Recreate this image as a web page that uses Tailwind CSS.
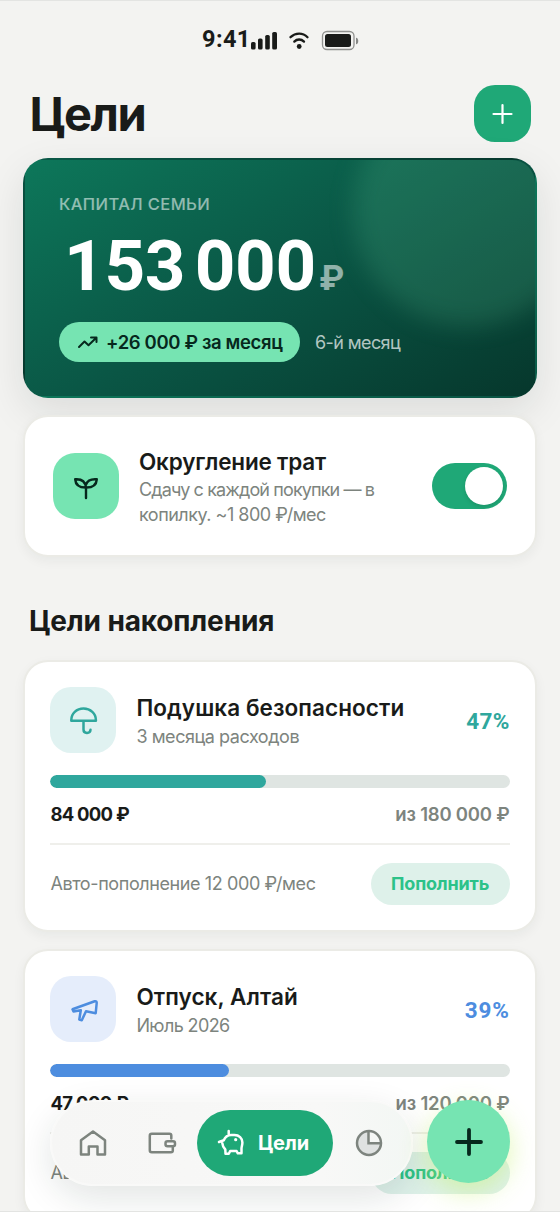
<!DOCTYPE html>
<html lang="ru">
<head>
<meta charset="utf-8">
<title>Цели</title>
<script src="https://cdn.jsdelivr.net/npm/@tailwindcss/browser@4"></script>
</head>
<body class="bg-[#f3f3f1]">
<div class="relative h-[1212px] w-[560px] overflow-hidden border-y border-[#e3e4e2] bg-[#f3f3f1] px-[23px] font-['Inter','Liberation_Sans',sans-serif] text-[#191b19]">

  <!-- Status bar -->
  <div class="flex h-[76px] items-center justify-center pl-[2px] pt-[1px]">
    <span class="w-[48px] whitespace-nowrap font-['Roboto',sans-serif] text-[23.500px] font-bold leading-none tracking-[0.4px]">9:41</span>
    <svg width="110" height="24" viewBox="0 0 110 24" fill="#191b19">
      <rect x="1" y="14" width="4.6" height="7.500" rx="1.6"/><rect x="8" y="10.500" width="4.6" height="11" rx="1.6"/><rect x="15.2" y="7" width="4.6" height="14.500" rx="1.6"/><rect x="22.2" y="4" width="4.8" height="17.500" rx="1.6"/>
      <path d="M40.500 9.200C45.500 4.500 52.800 4.500 57.500 9.200M44.300 13.600C47 10.800 51.200 10.800 54 13.600" fill="none" stroke="#191b19" stroke-width="2.300" stroke-linecap="round"/>
      <circle cx="49.200" cy="18.500" r="2.400"/>
      <rect x="72.500" y="3.500" width="31.500" height="18" rx="4.500" fill="none" stroke="#191b19" stroke-opacity=".45" stroke-width="1.300"/>
      <rect x="75" y="6" width="26" height="13" rx="2.500"/>
      <path d="M106 9.700c3 .3 3 6.300 0 6.600z" fill-opacity=".5"/>
    </svg>
  </div>

  <!-- Header -->
  <header class="flex h-[81px] items-start justify-between pl-[6.500px] pr-[6px] pt-[8px]">
    <h1 class="text-[47px] font-bold leading-[57px] tracking-[-1.500px]">Цели</h1>
    <button class="flex size-[57px] items-center justify-center rounded-[21px] bg-[#1fa877]">
      <svg width="24" height="24" viewBox="0 0 24 24" stroke="#fff" stroke-width="2.200" stroke-linecap="round"><path d="M11.500 3v18M2.500 12h18"/></svg>
    </button>
  </header>

  <!-- Balance -->
  <section class="relative h-[240px] w-[514px] overflow-hidden rounded-[25px] border-2 border-transparent bg-[linear-gradient(150deg,#0d775a_0%,#0a5645_50%,#06372c_100%)] px-[34px] pt-[33px] shadow-[0_14px_40px_rgba(20,30,25,0.1)]">
    <div class="absolute -top-[64px] left-[328px] size-[230px] rounded-full bg-[#6ee0a8]/16 blur-[12px]"></div>
    <div class="relative text-white">
      <div class="text-[16.500px] font-medium leading-[22px] tracking-[0.4px] text-white/55">КАПИТАЛ СЕМЬИ</div>
      <div class="mt-[23px] flex h-[56px] items-baseline whitespace-nowrap pl-[5px] leading-[56px]">
        <span class="w-[255px] font-['Roboto',sans-serif] text-[71px] font-bold tracking-[-0.3px] [word-spacing:-8px]">153 000</span>
        <span class="text-[34px] font-bold text-white/55">₽</span>
      </div>
      <div class="mt-[28px] flex items-center gap-[15px]">
        <div class="flex h-[40px] w-[241px] items-center rounded-full bg-[#76e4b2] pl-[18px] text-[#06281d]">
          <svg width="22" height="20" viewBox="0 0 22 20" fill="none" stroke="currentColor" stroke-width="2" stroke-linecap="round" stroke-linejoin="round"><path d="M2 15l5.500-5.500 4 3.800L19 6M14 5.500h5.500v4.500"/></svg>
          <span class="ml-[7px] whitespace-nowrap pt-[1px] text-[18.500px] font-semibold tracking-[-0.350px]">+26 000 ₽ за месяц</span>
        </div>
        <span class="whitespace-nowrap text-[18px] tracking-[-0.600px] text-white/70">6-й месяц</span>
      </div>
    </div>
  </section>

  <!-- Round-up -->
  <section class="relative mt-[17px] flex h-[142px] w-[514px] items-center rounded-[25px] border-2 border-[#ebebe6] bg-white pl-[28px] pr-[28px] shadow-[0_4px_12px_rgba(20,40,30,0.05)]">
    <div class="flex size-[66px] shrink-0 items-center justify-center rounded-[22px] bg-[#76e4b2]">
      <svg width="32" height="32" viewBox="0 0 32 32" fill="none" stroke="#06281d" stroke-width="2.400" stroke-linecap="round" stroke-linejoin="round"><path d="M16 28V17.500C9.500 17.600 5.600 15.500 5.200 9.300 11.500 8.800 15.300 11.500 16 17.500M16 17.500C22.500 17.600 26.400 15.500 26.800 9.300 21 8.800 17.300 10.800 16 14.500"/></svg>
    </div>
    <div class="ml-[20px] flex-1 whitespace-nowrap pt-[1px]">
      <div class="text-[22.500px] font-semibold leading-[30px] tracking-[-0.200px]">Округление трат</div>
      <div class="text-[18px] leading-[25px] text-[#7d847e]"><span class="tracking-[-0.880px]">Сдачу с каждой покупки — в</span><br><span class="tracking-[-0.500px]">копилку. ~1 800 ₽/мес</span></div>
    </div>
    <div class="flex h-[46px] w-[75px] items-center justify-end rounded-full bg-[#1fa877] pr-[4px]"><div class="size-[38px] rounded-full bg-white shadow-[0_2px_4px_rgba(0,0,0,0.12)]"></div></div>
  </section>

  <h2 class="mt-[45px] pl-[6px] text-[28px] font-bold leading-[38px] tracking-[-0.150px]">Цели накопления</h2>

  <!-- Safety cushion -->
  <section class="relative mt-[20px] h-[272px] w-[514px] rounded-[25px] border-2 border-[#ebebe6] bg-white px-[25.400px] pt-[25px] shadow-[0_4px_12px_rgba(20,40,30,0.05)]">
    <div class="flex h-[66px] items-center whitespace-nowrap">
      <div class="flex size-[66px] items-center justify-center rounded-[21px] bg-[#e0f2f1]">
        <svg width="33" height="33" viewBox="0 0 33 33" fill="none" stroke="#2fa79d" stroke-width="2.500" stroke-linecap="round" stroke-linejoin="round"><path d="M4.300 16.800V16C4.300 9.500 9.500 4.600 16.500 4.600S28.900 9.500 28.900 16v.8zM16.500 17v8.500c0 4.500 6.800 4.500 7 .2"/></svg>
      </div>
      <div class="ml-[20px] flex-1 pt-[3px]">
        <div class="text-[22.500px] font-semibold leading-[30px] tracking-[0.080px]">Подушка безопасности</div>
        <div class="text-[18px] leading-[27px] tracking-[-0.450px] text-[#7d847e]">3 месяца расходов</div>
      </div>
      <div class="pt-[3px] font-['Roboto',sans-serif] text-[22.500px] font-bold tracking-[0.300px] text-[#2fa79d]">47%</div>
    </div>
    <div class="mt-[22px] h-[13px] overflow-hidden rounded-full bg-[#dfe5e2]"><div class="h-full rounded-full bg-[#2fa79d]" style="width:47%"></div></div>
    <div class="mt-[13px] flex justify-between whitespace-nowrap text-[18.500px] font-bold leading-[26px]"><span class="tracking-[-0.750px]">84 000 ₽</span><span class="font-semibold tracking-[-0.200px] text-[#7d847e]">из 180 000 ₽</span></div>
    <div class="mt-[16px] h-[1.500px] bg-[#efefeb]"></div>
    <div class="mt-[18px] flex h-[42px] items-center justify-between whitespace-nowrap">
      <span class="text-[18px] tracking-[-0.400px] text-[#7d847e]">Авто-пополнение 12 000 ₽/мес</span>
      <button class="h-[42px] w-[139px] rounded-full bg-[#def1ea] text-[18px] font-bold tracking-[-0.200px] text-[#2cc289]">Пополнить</button>
    </div>
  </section>

  <!-- Vacation -->
  <section class="relative mt-[17px] h-[272px] w-[514px] rounded-[25px] border-2 border-[#ebebe6] bg-white px-[25.400px] pt-[25px] shadow-[0_4px_12px_rgba(20,40,30,0.05)]">
    <div class="flex h-[66px] items-center whitespace-nowrap">
      <div class="flex size-[66px] items-center justify-center rounded-[21px] bg-[#e5edfb]">
        <svg width="33" height="33" viewBox="0 0 33 33" fill="none" stroke="#4d8ddf" stroke-width="2.500" stroke-linecap="round" stroke-linejoin="round"><path d="M5.500 16.300L27.700 8.300Q29.800 7.800 29.700 10L28.700 20.200 19 18.200 14.800 27.200 12.300 26.500 13.800 17.300 6.500 18.600z"/></svg>
      </div>
      <div class="ml-[20px] flex-1 pt-[3px]">
        <div class="text-[22.500px] font-semibold leading-[30px] tracking-[0.080px]">Отпуск, Алтай</div>
        <div class="text-[18px] leading-[27px] tracking-[-0.600px] text-[#7d847e]">Июль 2026</div>
      </div>
      <div class="pt-[3px] font-['Roboto',sans-serif] text-[22.500px] font-bold tracking-[0.800px] text-[#4d8ddf]">39%</div>
    </div>
    <div class="mt-[22px] h-[13px] overflow-hidden rounded-full bg-[#dfe5e2]"><div class="h-full rounded-full bg-[#4d8ddf]" style="width:39%"></div></div>
    <div class="mt-[13px] flex justify-between whitespace-nowrap text-[18.500px] font-bold leading-[26px]"><span class="tracking-[-0.650px]">47 000 ₽</span><span class="font-semibold tracking-[-0.200px] text-[#7d847e]">из 120 000 ₽</span></div>
    <div class="mt-[16px] h-[1.500px] bg-[#efefeb]"></div>
    <div class="mt-[18px] flex h-[42px] items-center justify-between whitespace-nowrap">
      <span class="text-[18px] tracking-[-0.400px] text-[#7d847e]">Авто-пополнение 8 000 ₽/мес</span>
      <button class="h-[42px] w-[139px] rounded-full bg-[#def1ea] text-[18px] font-bold tracking-[-0.200px] text-[#2cc289]">Пополнить</button>
    </div>
  </section>

  <!-- Floating navigation -->
  <nav class="absolute left-[50px] top-[1099px] flex h-[86px] w-[363px] items-center rounded-full border-2 border-[#f9f9f8] bg-[linear-gradient(90deg,#f6f6f5_0%,#f8f8f7_75%,#f3f7f4_100%)] pl-[24px] text-[#7d847e] shadow-[0_12px_36px_rgba(20,40,30,0.12)]">
    <svg class="ml-[1px]" width="32" height="32" viewBox="0 0 32 32" fill="none" stroke="currentColor" stroke-width="2.500" stroke-linecap="round" stroke-linejoin="round"><path d="M4 13.200L16 4.500 28 13.200V27.500H20.500V19.500H11.800V27.500H4z"/></svg>
    <svg class="ml-[37px]" width="32" height="32" viewBox="0 0 32 32" fill="none" stroke="currentColor" stroke-width="2.500" stroke-linecap="round" stroke-linejoin="round"><path d="M25.300 11.500V8.500a1.800 1.800 0 0 0-1.800-1.800H5.800A2 2 0 0 0 3.800 8.700V23.300a2 2 0 0 0 2 2H25a1.800 1.800 0 0 0 1.800-1.800V20.500"/><rect x="19.500" y="14.200" width="9.500" height="5" rx="2"/></svg>
    <div class="ml-[19.400px] flex h-[66px] w-[136px] items-center rounded-full bg-[#1fa877] text-white">
      <svg class="ml-[17.500px]" width="32" height="32" viewBox="0 0 32 32" fill="none" stroke="currentColor" stroke-width="2.500" stroke-linecap="round" stroke-linejoin="round"><path d="M4 15L8.800 13.300C10.200 9.800 12.800 8 16 8H19.500C24 8 27.400 11.200 27.400 15.500 27.400 18 26.600 19.500 26.500 21.500V26.300H22.800L21.600 24H15.200L13.800 26.800H10.500L10.300 22.500C8.500 20.800 7.500 18.800 7.300 16.200M13.700 4V8.200"/><circle cx="20.700" cy="12.700" r="1.600" fill="currentColor" stroke="none"/></svg>
      <span class="ml-[11px] text-[20px] font-bold tracking-[-0.200px]">Цели</span>
    </div>
    <svg class="ml-[20px]" width="32" height="32" viewBox="0 0 32 32" fill="none" stroke="currentColor" stroke-width="2.500"><path d="M16 16V4A12 12 0 1 0 28 16z" fill="#dfe2e1" stroke="none"/><circle cx="16" cy="16" r="12"/><path d="M15.500 4V16.200H28"/></svg>
  </nav>
  <button class="absolute left-[427px] top-[1099px] flex size-[83px] items-center justify-center rounded-full bg-[#76e4b2] shadow-[0_9px_27px_rgba(190,240,90,0.45)]">
    <svg width="32" height="32" viewBox="0 0 32 32" stroke="#06281d" stroke-width="3.800" stroke-linecap="round"><path d="M16 4v24M4 16h24"/></svg>
  </button>
</div>
</body>
</html>
